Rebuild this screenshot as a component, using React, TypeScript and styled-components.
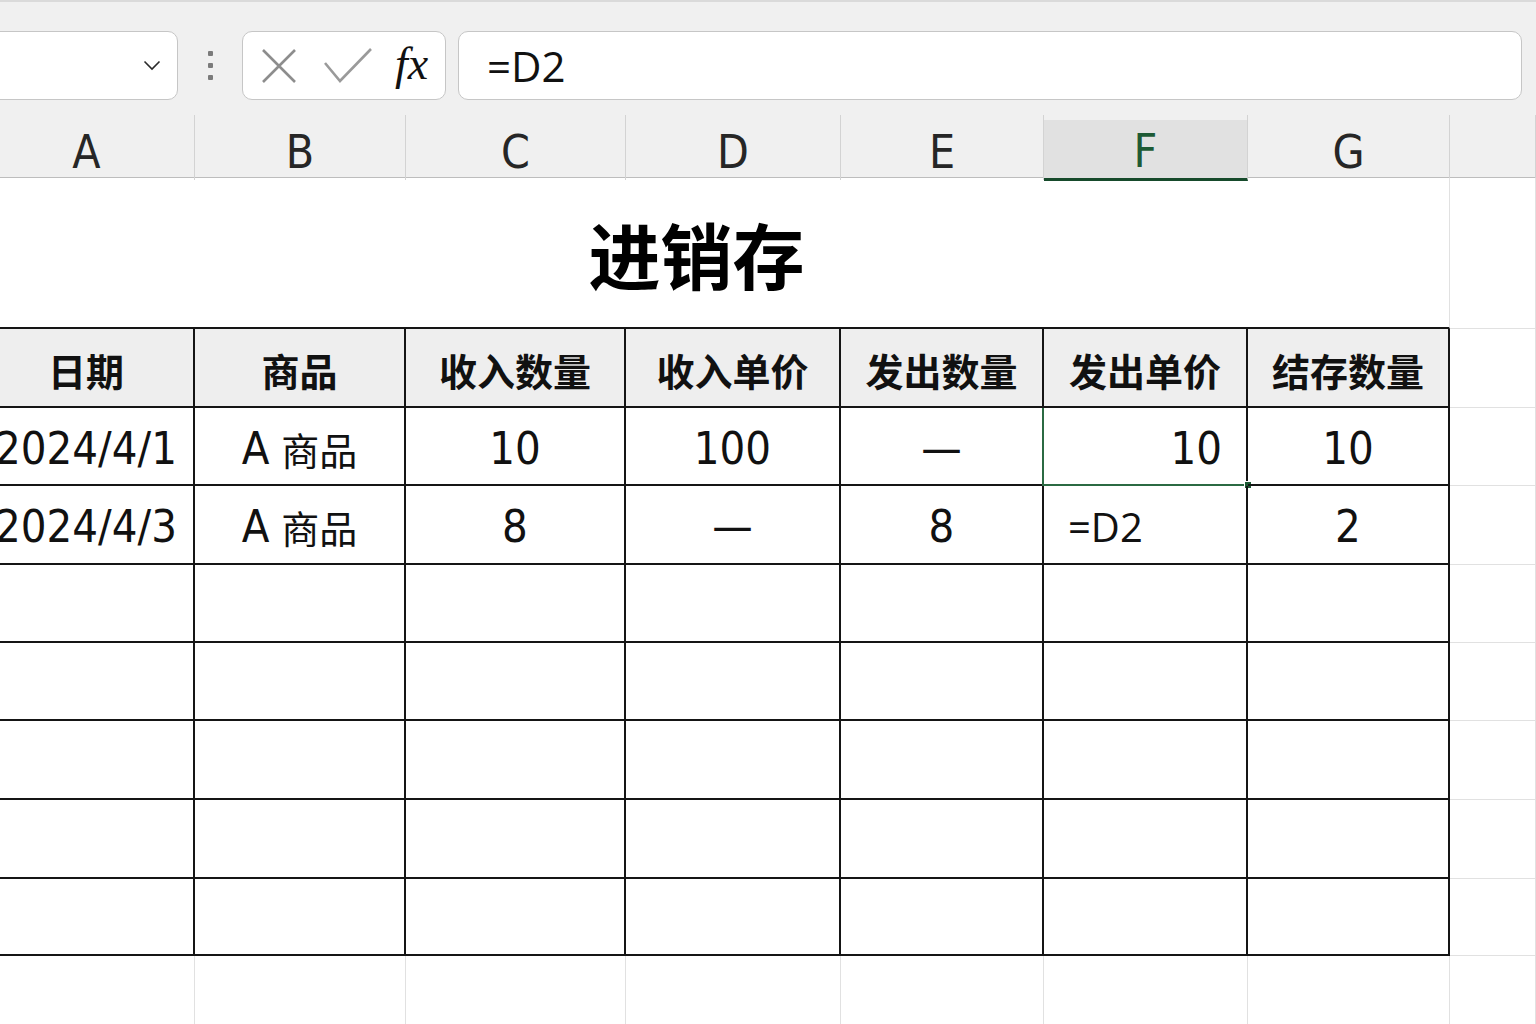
import React from "react";
import styled, { createGlobalStyle, css } from "styled-components";

const GlobalStyle = createGlobalStyle`
  html, body {
    margin: 0;
    padding: 0;
    background: #ffffff;
  }
  body {
    width: 1536px;
    height: 1024px;
    overflow: hidden;
    font-family: "Noto Sans CJK SC", sans-serif;
  }
  * {
    box-sizing: border-box;
  }
`;

const CELL_FONT = `"Liberation Sans Narrow", "DejaVu Sans Condensed", "Noto Sans CJK SC", sans-serif`;
const UI_FONT = `"Open Sans", "Noto Sans CJK SC", sans-serif`;
const CJK_FONT = `"Noto Sans CJK SC", sans-serif`;

const COLUMNS = "216px 211px 220px 215px 203px 204px 202px 1fr";
const GRID_LIGHT = "#e1e1e1";
const BORDER_DARK = "#151515";

const Page = styled.div`
  width: 1536px;
  height: 1024px;
  overflow: hidden;
  background: #ffffff;
`;

/* ---------- formula bar ---------- */

const FormulaBar = styled.div`
  height: 112px;
  background: #f0f0f0;
  border-top: 2px solid #dadada;
  display: flex;
  align-items: flex-start;
  padding-top: 29px;
`;

const NameBox = styled.div`
  margin-left: -20px;
  width: 198px;
  height: 69px;
  background: #ffffff;
  border: 1px solid #c6c6c6;
  border-radius: 10px;
  display: flex;
  align-items: center;
  justify-content: flex-end;
  padding-right: 16px;
`;

const Grip = styled.div`
  width: 64px;
  height: 69px;
  display: flex;
  flex-direction: column;
  align-items: center;
  justify-content: center;
  gap: 7px;
`;

const GripDot = styled.span`
  width: 5px;
  height: 5px;
  background: #7b7b7b;
  border-radius: 1px;
`;

const FxBox = styled.div`
  width: 204px;
  height: 69px;
  background: #ffffff;
  border: 1px solid #c6c6c6;
  border-radius: 10px;
  display: flex;
  align-items: center;
  padding-left: 18px;
  gap: 27px;
`;

const FxLabel = styled.span`
  font-family: "Liberation Serif", "DejaVu Serif", serif;
  font-style: italic;
  font-size: 46px;
  line-height: 1;
  color: #111111;
  margin-left: -4px;
  margin-top: -4px;
`;

const FormulaInput = styled.div`
  margin-left: 12px;
  width: 1064px;
  height: 69px;
  background: #ffffff;
  border: 1px solid #c6c6c6;
  border-radius: 10px;
  display: flex;
  align-items: center;
  padding-left: 28px;
  font-family: ${UI_FONT};
  font-size: 42px;
  color: #111111;
`;

/* ---------- column headers ---------- */

const HeaderStrip = styled.div`
  margin-left: -21px;
  height: 66px;
  background: #f0f0f0;
  display: grid;
  grid-template-columns: ${COLUMNS};
  padding-top: 3px;
  border-bottom: 1px solid #bdbdbd;
`;

const ColHead = styled.div<{ $active?: boolean }>`
  border-right: 1px solid #d3d3d3;
  display: flex;
  align-items: center;
  justify-content: center;
  padding-top: 9px;
  font-family: ${CELL_FONT};
  font-size: 46px;
  font-weight: 300;
  color: #262626;
  ${(p) =>
    p.$active &&
    css`
      background: linear-gradient(to bottom, transparent 5px, #e1e1e1 5px);
      border-bottom: 3px solid #164a2b;
      color: #1d5a34;
      margin-bottom: -1px;
    `}
`;

/* ---------- sheet ---------- */

const Sheet = styled.div`
  margin-left: -21px;
  display: grid;
  grid-template-columns: ${COLUMNS};
  grid-template-rows: 151px 79px 78px 79px 78px 78px 79px 79px 77px 78px 78px;
`;

const TitleCell = styled.div`
  grid-column: 1 / 8;
  border-bottom: 2px solid ${BORDER_DARK};
  border-right: 1px solid ${GRID_LIGHT};
  display: flex;
  align-items: center;
  justify-content: center;
  padding-right: 35px;
  font-family: ${CJK_FONT};
  font-weight: 700;
  font-size: 72px;
  color: #000000;
`;

type Align = "center" | "left" | "right";

const Cell = styled.div<{ $table?: boolean; $head?: boolean; $align?: Align }>`
  position: relative;
  display: flex;
  align-items: center;
  justify-content: ${(p) =>
    p.$align === "left" ? "flex-start" : p.$align === "right" ? "flex-end" : "center"};
  padding: 4px 24px 0;
  font-family: ${CELL_FONT};
  font-size: 45px;
  color: #111111;
  white-space: nowrap;
  border-right: 1px solid ${GRID_LIGHT};
  border-bottom: 1px solid ${GRID_LIGHT};
  ${(p) =>
    p.$table &&
    css`
      border-right: 2px solid ${BORDER_DARK};
      border-bottom: 2px solid ${BORDER_DARK};
    `}
  ${(p) =>
    p.$head &&
    css`
      background: #eeeeee;
      font-family: ${CJK_FONT};
      font-weight: 700;
      font-size: 38px;
      padding-top: 4px;
    `}
`;

const Han = styled.span`
  font-family: ${CJK_FONT};
  font-size: 38px;
  margin-left: 12px;
`;

const EditText = styled.span`
  font-family: ${UI_FONT};
  font-size: 40px;
`;

const Selection = styled.div`
  position: absolute;
  top: 0;
  left: -2px;
  right: -2px;
  bottom: -2px;
  border-left: 2px solid #2b6a43;
  border-bottom: 2px solid #2b6a43;
  pointer-events: none;
`;

const FillHandle = styled.span`
  position: absolute;
  right: -4px;
  bottom: -5px;
  width: 8px;
  height: 8px;
  background: #1c5a34;
  border: 1px solid #ffffff;
`;

const XIcon = () => (
  <svg width="36" height="36" viewBox="0 0 36 36">
    <path d="M2 2 L34 34 M34 2 L2 34" stroke="#8d8d8d" strokeWidth="2.6" fill="none" />
  </svg>
);

const CheckIcon = () => (
  <svg width="48" height="36" viewBox="0 0 48 36">
    <path d="M1 15 L16 33 L47 1" stroke="#9a9a9a" strokeWidth="2.6" fill="none" />
  </svg>
);

const Chevron = () => (
  <svg width="18" height="11" viewBox="0 0 18 11">
    <path d="M1.5 1.5 L9 9 L16.5 1.5" stroke="#2a2a2a" strokeWidth="1.6" fill="none" />
  </svg>
);

const LETTERS = ["A", "B", "C", "D", "E", "F", "G", ""];
const HEADINGS = ["日期", "商品", "收入数量", "收入单价", "发出数量", "发出单价", "结存数量"];

const product = (
  <>
    A<Han>商品</Han>
  </>
);

const dataRows: React.ReactNode[][] = [
  ["2024/4/1", product, "10", "100", "—", "10", "10"],
  ["2024/4/3", product, "8", "—", "8", <EditText>=D2</EditText>, "2"],
];

const BLANK_TABLE_ROWS = 5;
const BLANK_SHEET_ROWS = 2;

export default function App() {
  return (
    <Page>
      <GlobalStyle />
      <FormulaBar>
        <NameBox>
          <Chevron />
        </NameBox>
        <Grip>
          <GripDot />
          <GripDot />
          <GripDot />
        </Grip>
        <FxBox>
          <XIcon />
          <CheckIcon />
          <FxLabel>fx</FxLabel>
        </FxBox>
        <FormulaInput>=D2</FormulaInput>
      </FormulaBar>

      <HeaderStrip>
        {LETTERS.map((l, i) => (
          <ColHead key={i} $active={l === "F"}>
            {l}
          </ColHead>
        ))}
      </HeaderStrip>

      <Sheet>
        <TitleCell>进销存</TitleCell>
        <Cell />

        {HEADINGS.map((h) => (
          <Cell key={h} $table $head>
            {h}
          </Cell>
        ))}
        <Cell />

        {dataRows.map((row, r) => (
          <React.Fragment key={r}>
            {row.map((v, c) => {
              const selected = r === 0 && c === 5;
              const editing = r === 1 && c === 5;
              return (
                <Cell key={c} $table $align={selected ? "right" : editing ? "left" : "center"}>
                  {v}
                  {selected && (
                    <Selection>
                      <FillHandle />
                    </Selection>
                  )}
                </Cell>
              );
            })}
            <Cell />
          </React.Fragment>
        ))}

        {Array.from({ length: BLANK_TABLE_ROWS }).map((_, r) => (
          <React.Fragment key={`t${r}`}>
            {HEADINGS.map((h) => (
              <Cell key={h} $table />
            ))}
            <Cell />
          </React.Fragment>
        ))}

        {Array.from({ length: BLANK_SHEET_ROWS }).map((_, r) => (
          <React.Fragment key={`s${r}`}>
            {LETTERS.map((l, i) => (
              <Cell key={i} />
            ))}
          </React.Fragment>
        ))}
      </Sheet>
    </Page>
  );
}
